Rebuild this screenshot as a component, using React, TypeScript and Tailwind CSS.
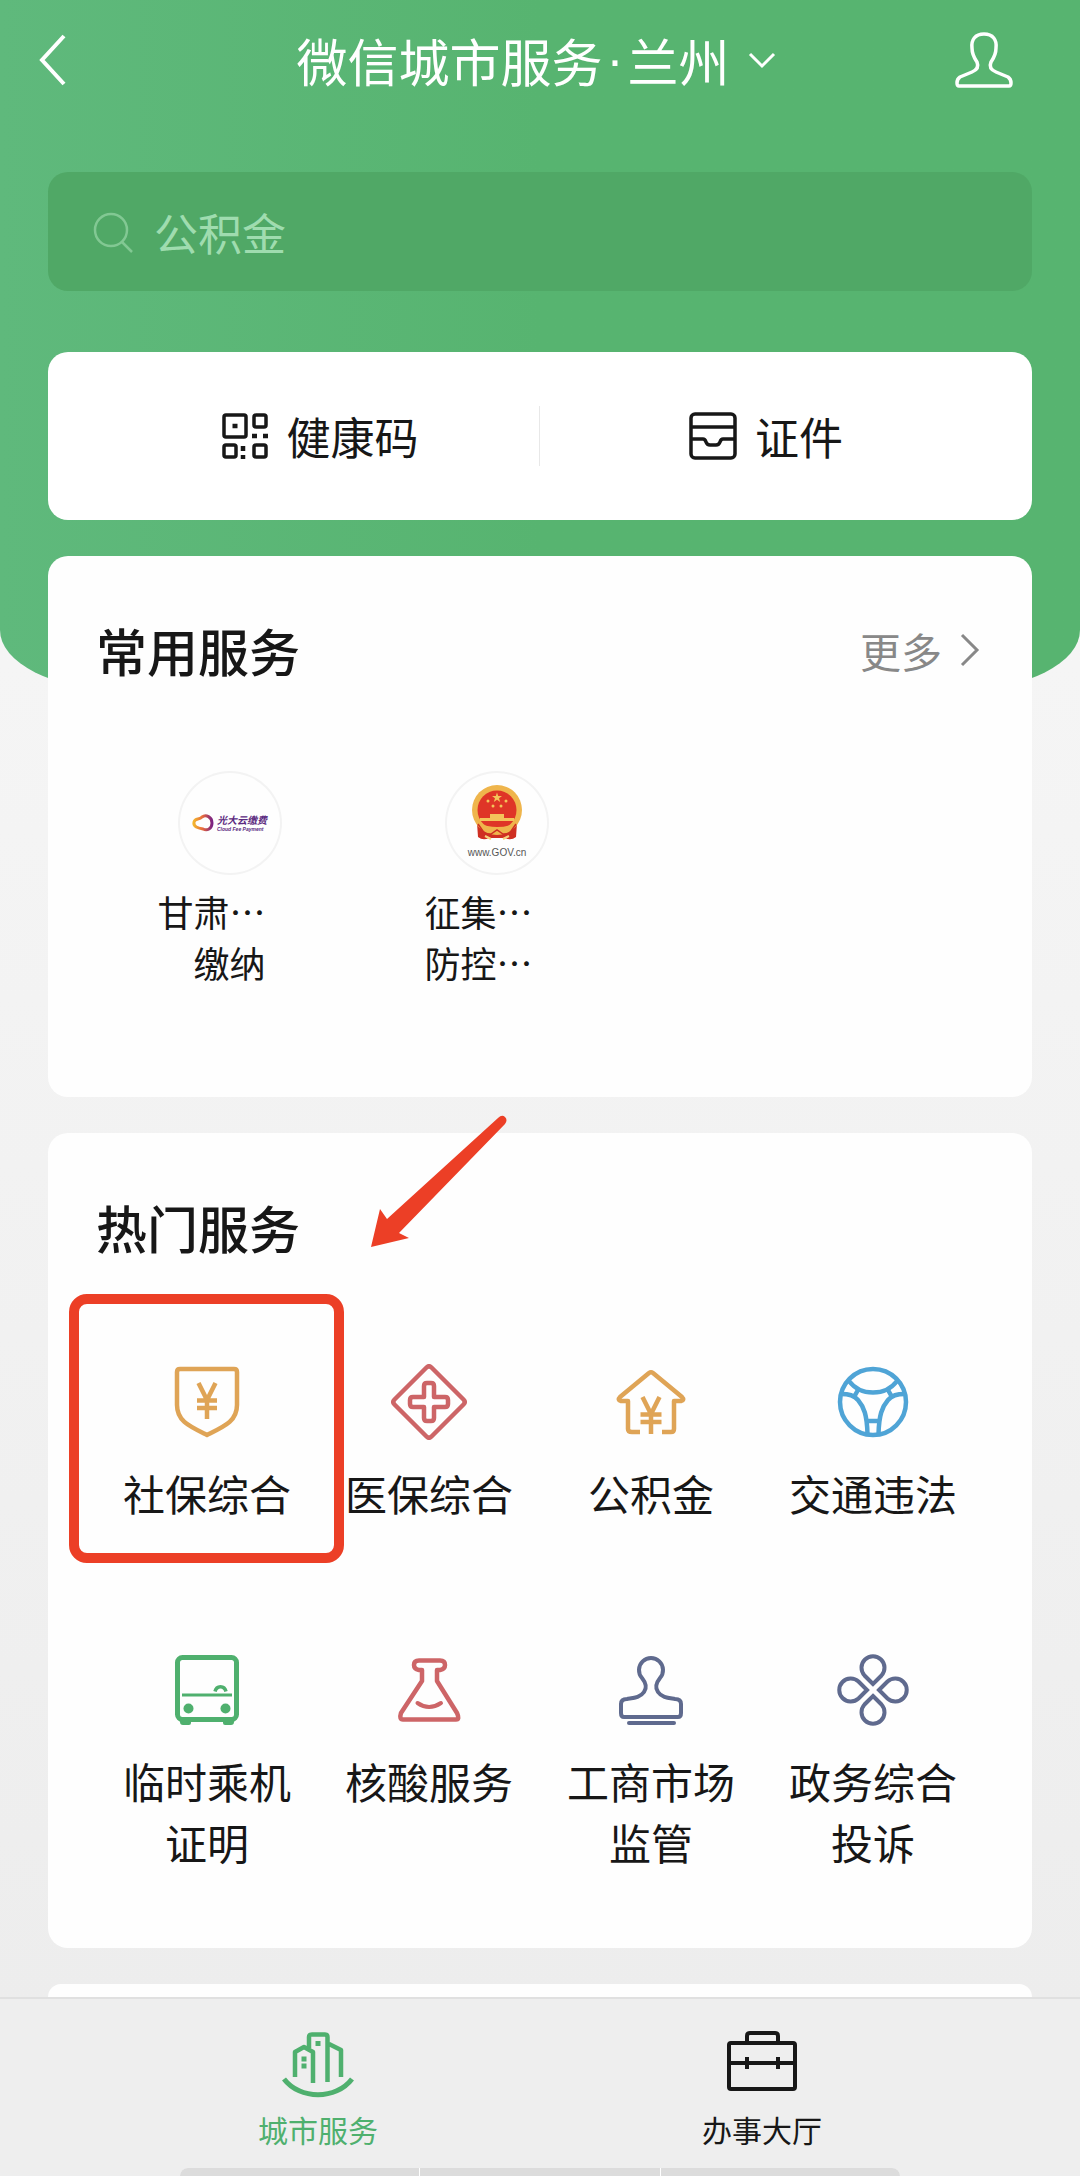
import React from 'react';

interface Service {
  name: string;
  color: string;
  icon: React.ReactNode;
  highlighted?: boolean;
}

const iconProps = {
  viewBox: '0 0 76 76',
  fill: 'none',
  stroke: 'currentColor',
  strokeWidth: 4.5,
  strokeLinejoin: 'round' as const,
  'aria-hidden': true,
};

const ShieldIcon = () => (
  <svg {...iconProps} className="size-[76px]">
    <path d="M11 5H65Q68 5 68 8V41C68 57 56 62 38 71C20 62 8 57 8 41V8Q8 5 11 5Z" />
    <path d="M29.500 19L38 36L46.500 19M28 36.500H48M28 44H48M38 35V55" />
  </svg>
);

const MedicalIcon = () => (
  <svg {...iconProps} className="size-[76px]">
    <path d="M35.500 3.500Q38 1 40.500 3.500L72.500 35.500Q75 38 72.500 40.500L40.500 72.500Q38 75 35.500 72.500L3.500 40.500Q1 38 3.500 35.500Z" />
    <path d="M36 19H40Q43 19 43 22V33H54Q57 33 57 36V40Q57 43 54 43H43V54Q43 57 40 57H36Q33 57 33 54V43H22Q19 43 19 40V36Q19 33 22 33H33V22Q33 19 36 19Z" />
  </svg>
);

const HouseIcon = () => (
  <svg {...iconProps} className="size-[76px]">
    <path d="M27 68H19Q15 68 15 65V37H8Q4 36 7 33L36 9Q38 7.500 40 9L69 33Q72 36 68 37H61V65Q61 68 58 68H49" />
    <path d="M29.500 33L38 50L46.500 33M27.500 50.500H48.500M27.500 58H48.500M38 49V70" />
  </svg>
);

const WheelIcon = () => (
  <svg {...iconProps} className="size-[76px]">
    <circle cx="38" cy="38" r="33" />
    <path d="M14 17C20 25 28 28.500 38 28.500C48 28.500 56 25 62 17" />
    <path d="M6 30C14 30 19 31 23 36C29 43 32 51 32.500 70M70 30C62 30 57 31 53 36C47 43 44 51 43.500 70M33 57H43M23 26L19 33M53 26L57 33" />
  </svg>
);

const BusIcon = () => (
  <svg {...iconProps} className="size-[76px]">
    <rect x="8.500" y="5.500" width="59" height="62" rx="5" strokeWidth="5" />
    <path d="M13 43H63" strokeWidth="3" />
    <path d="M46 39.500C47.500 33 55.500 33 57 39.500" strokeWidth="3.500" />
    <circle cx="19.500" cy="56.500" r="5" fill="currentColor" stroke="none" />
    <circle cx="56.500" cy="56.500" r="5" fill="currentColor" stroke="none" />
    <path d="M11 68H22V71Q22 73 20 73H14Q11 73 11 70ZM54 68H65V70Q65 73 62 73H56Q54 73 54 71Z" fill="currentColor" stroke="none" />
  </svg>
);

const FlaskIcon = () => (
  <svg {...iconProps} className="size-[76px]">
    <path d="M31 18H28Q23 17 23 13Q23 8.500 28 8.500H49Q54 8.500 54 13Q54 17 49 18H46V29L66 61Q69 67.500 65 67.500H12Q8 67.500 10 61L31 29Z" />
    <path d="M26.500 51Q38 59 50 51" strokeLinecap="round" strokeWidth="4" />
  </svg>
);

const StampIcon = () => (
  <svg {...iconProps} strokeWidth={4} className="size-[76px]">
    <path d="M29 26A12 12 0 1 1 47 26C43 31 42 36 45 40C49 46 56 46 62 47Q68 47 68 52V61Q68 65 65 65H11Q8 65 8 61V52Q8 47 14 47C20 46 27 46 31 40C34 36 33 31 29 26Z" />
    <path d="M16 71H61" strokeLinecap="round" />
  </svg>
);

const CloverIcon = () => (
  <svg {...iconProps} strokeWidth={4} strokeLinejoin="miter" className="size-[76px]">
    {[0, 90, 180, 270].map((angle) => (
      <path
        key={angle}
        d="M38 32L29.500 23.500A11.500 11.500 0 1 1 46.500 23.500Z"
        transform={`rotate(${angle} 38 38)`}
      />
    ))}
  </svg>
);

const services: Service[] = [
  { name: '社保综合', color: 'text-[#dfa456]', icon: <ShieldIcon />, highlighted: true },
  { name: '医保综合', color: 'text-[#cd6567]', icon: <MedicalIcon /> },
  { name: '公积金', color: 'text-[#dfa456]', icon: <HouseIcon /> },
  { name: '交通违法', color: 'text-[#4fa4d6]', icon: <WheelIcon /> },
  { name: '临时乘机证明', color: 'text-[#4fb06e]', icon: <BusIcon /> },
  { name: '核酸服务', color: 'text-[#cd6567]', icon: <FlaskIcon /> },
  { name: '工商市场监管', color: 'text-[#5f6a8e]', icon: <StampIcon /> },
  { name: '政务综合投诉', color: 'text-[#5f6a8e]', icon: <CloverIcon /> },
];

const CloudPayLogo = () => (
  <svg viewBox="0 0 104 104" className="size-[104px]" aria-hidden="true">
    <defs>
      <linearGradient id="cloud-pay" x1="0" x2="1" y1="0" y2="0">
        <stop offset="0" stopColor="#f3b52f" />
        <stop offset="0.5" stopColor="#e5673f" />
        <stop offset="1" stopColor="#7b2382" />
      </linearGradient>
    </defs>
    <path
      d="M16 51C17 47 21 49 24 46C28 43 34 46 34 52C34 58 29 60 25 58C20 57 15 56 16 51Z"
      fill="none"
      stroke="url(#cloud-pay)"
      strokeWidth="3"
    />
    <text x="39" y="53" fontSize="10" fontWeight="700" fontStyle="italic" fill="#5b2a80">
      光大云缴费
    </text>
    <text x="39" y="60" fontSize="5" fontWeight="700" fontStyle="italic" fill="#5b2a80" fontFamily="Liberation Sans">
      Cloud Fee Payment
    </text>
  </svg>
);

const GovLogo = () => (
  <svg viewBox="0 0 104 104" className="size-[104px]" aria-hidden="true">
    <path d="M32 52H72L71 66Q66 70 60 67H44Q38 70 33 66Z" fill="#cf2f22" />
    <circle cx="52" cy="39" r="25" fill="#efb54c" />
    <circle cx="52" cy="39" r="19.500" fill="#df3527" />
    <path d="M52 21.500L53.200 25H57L54 27.300L55.200 31L52 28.800L48.800 31L50 27.300L47 25H50.800Z" fill="#f4c45a" />
    <circle cx="43" cy="30" r="1.500" fill="#f4c45a" />
    <circle cx="61" cy="30" r="1.500" fill="#f4c45a" />
    <circle cx="48" cy="35" r="1.500" fill="#f4c45a" />
    <circle cx="56" cy="35" r="1.500" fill="#f4c45a" />
    <path d="M45 43H59V47H69V50H35V47H45Z" fill="#f4c45a" />
    <path d="M33 52Q52 60 71 52L66 60L58 58L52 61L46 58L38 60Z" fill="#efb54c" />
    <path d="M33 53L40 63H46L52 59L58 63H64L71 53" fill="none" stroke="#cf2f22" strokeWidth="1.500" />
    <path d="M40 65L46 68M64 65L58 68" stroke="#f6d27d" strokeWidth="2" />
    <text x="52" y="85" textAnchor="middle" fontSize="10" fill="#555" fontFamily="Liberation Sans">
      www.GOV.cn
    </text>
  </svg>
);

const App: React.FC = () => {
  return (
    <div className="flex min-h-screen flex-col bg-linear-to-b from-[#f9f9f9] to-[#ececec] font-['Noto_Sans_CJK_SC',sans-serif] text-[#171717]">
      <header className="rounded-b-[120px_60px] bg-linear-to-r from-[#5fb97c] via-[#57b470] to-[#57b470] px-12 pb-[170px]">
        <div className="grid h-[120px] grid-cols-[1fr_auto_1fr] items-center text-white">
          <button type="button" aria-label="返回" className="-ml-3 justify-self-start">
            <svg viewBox="0 0 32 52" className="h-[52px] w-8" fill="none" stroke="currentColor" strokeWidth="4" aria-hidden="true">
              <path d="M28 2L6 26L28 50" />
            </svg>
          </button>
          <button type="button" className="flex items-center gap-[18px] pr-2 text-[51px] leading-[60px]">
            <span className="flex">
              微信城市服务
              <span className="px-1 font-['Liberation_Sans',sans-serif]">·</span>
              兰州
            </span>
            <svg viewBox="0 0 28 18" className="h-[18px] w-7" fill="none" stroke="currentColor" strokeWidth="3" aria-hidden="true">
              <path d="M2 3L14 15L26 3" />
            </svg>
          </button>
          <button type="button" aria-label="个人中心" className="mr-[18px] justify-self-end">
            <svg viewBox="0 0 60 58" className="h-[58px] w-[60px]" fill="none" stroke="currentColor" strokeWidth="3.500" strokeLinejoin="round" aria-hidden="true">
              <path d="M30 3C21 3 17 9 18 17C18 24 21 28 23 31C25 36 23 39 18 41L6 46Q3 48 3 52Q3 55 5 55H55Q57 55 57 52Q57 48 54 46L42 41C37 39 35 36 37 31C39 28 42 24 42 17C43 9 39 3 30 3Z" />
            </svg>
          </button>
        </div>

        <label className="mt-[52px] flex h-[119px] items-center gap-5 rounded-[20px] bg-[#50a866] px-11 text-[#9fdcaf]">
          <svg viewBox="0 0 42 42" className="size-[42px] shrink-0 text-[#82c893]" fill="none" stroke="currentColor" strokeWidth="2.500" aria-hidden="true">
            <circle cx="19" cy="19" r="16" />
            <path d="M30 31L40 41" />
          </svg>
          <input
            type="text"
            aria-label="搜索服务"
            placeholder="公积金"
            className="w-full bg-transparent text-[44px] leading-[60px] outline-none placeholder:text-[#9fdcaf]"
          />
        </label>

        <div className="mt-[61px] grid h-[168px] grid-cols-2 items-center rounded-[20px] bg-white text-[44px] leading-[60px]">
          <button type="button" className="flex items-center justify-center gap-[18px] border-r border-[#e8e8e8] pl-[52px]">
            <svg viewBox="0 0 48 48" className="size-12" fill="none" stroke="currentColor" strokeWidth="3.500" aria-hidden="true">
              <rect x="3" y="3" width="22" height="22" rx="2" />
              <rect x="33" y="3" width="12" height="12" rx="2" />
              <rect x="3" y="33" width="12" height="12" rx="2" />
              <rect x="33" y="33" width="12" height="12" rx="2" />
              <path d="M11.500 14H16.500M31 24H36M42 24H47M22 34V39M22 43V47" strokeWidth="4.500" />
            </svg>
            健康码
          </button>
          <button type="button" className="flex items-center justify-center gap-[18px] pr-10">
            <svg viewBox="0 0 48 48" className="size-12" fill="none" stroke="currentColor" strokeWidth="3.500" aria-hidden="true">
              <rect x="2" y="2" width="44" height="44" rx="4" />
              <path d="M2 15H46M2 27H14Q16 27 17 30Q18 33 21 33H27Q30 33 31 30Q32 27 34 27H46" />
            </svg>
            证件
          </button>
        </div>
      </header>

      <main className="-mt-[134px] flex flex-1 flex-col gap-9 px-12">
        <section className="rounded-[20px] bg-[#fefefe] pb-[109px]">
          <div className="flex items-center justify-between px-12 pt-16">
            <h2 className="text-[51px] leading-[60px] font-medium">常用服务</h2>
            <a href="#more" className="flex items-center gap-[18px] pr-1 text-[41px] leading-[60px] text-[#888]">
              更多
              <svg viewBox="0 0 20 34" className="h-[34px] w-5" fill="none" stroke="currentColor" strokeWidth="3" aria-hidden="true">
                <path d="M2 2L17 17L2 32" />
              </svg>
            </a>
          </div>
          <div className="mt-[91px] flex px-12 text-right text-[36px] leading-[51px]">
            <a href="#payment" className="flex w-[267px] flex-col items-center">
              <span className="rounded-full shadow-[inset_0_0_0_2px_#f3f3f3]">
                <CloudPayLogo />
              </span>
              <span className="mt-[11px] pr-9">
                甘肃⋯
                <br />
                缴纳
              </span>
            </a>
            <a href="#collection" className="flex w-[267px] flex-col items-center">
              <span className="rounded-full shadow-[inset_0_0_0_2px_#f3f3f3]">
                <GovLogo />
              </span>
              <span className="mt-[11px] pr-9">
                征集⋯
                <br />
                防控⋯
              </span>
            </a>
          </div>
        </section>

        <section className="relative rounded-[20px] bg-[#fefefe] px-12 pb-[76px]">
          <h2 className="pt-16 text-[51px] leading-[60px] font-medium">热门服务</h2>
          <svg viewBox="0 0 138 134" className="absolute -top-[18px] left-[322px] h-[134px] w-[138px]" fill="#ec3f26" aria-hidden="true">
            <path d="M1 132L10 94L17 104L128 3Q132 -1 135 2Q138 5 135 9L29 118L39 123Z" />
          </svg>
          <div className="mt-[107px] grid grid-cols-4 gap-y-[68px]">
            {services.map((service) => (
              <a key={service.name} href="#service" className="relative flex min-h-[220px] flex-col items-center">
                <span className={service.color}>{service.icon}</span>
                <span className="mt-[22px] w-[170px] text-center text-[42px] leading-[61px]">
                  {service.name}
                </span>
                {service.highlighted && (
                  <span className="absolute -top-[70px] -left-[27px] h-[269px] w-[275px] rounded-[18px] border-10 border-[#ec3f26]" />
                )}
              </a>
            ))}
          </div>
        </section>

        <section className="min-h-3 flex-1 rounded-t-[20px] bg-[#fefefe]" />
      </main>

      <nav className="sticky bottom-0 border-t-2 border-[#e0e0e0] bg-[#eee]">
        <div className="grid grid-cols-2 px-24 pt-7 text-[30px] leading-[40px]">
          <a href="#city" className="flex flex-col items-center text-[#4fb06e]">
            <svg {...iconProps} className="size-[76px]">
              <path d="M15 50V25L24 20L33 25V56M29 21V10Q29 7.500 32 7.500H45Q47.500 7.500 47.500 10V55M49 17L61 23V50" />
              <path d="M4 52C20 73 56 73 72 52" strokeWidth="5" />
              <path d="M35.500 16.500H40.500M21.500 32H26.500M21.500 39H26.500" strokeWidth="5" />
            </svg>
            <span className="mt-[6px]">城市服务</span>
          </a>
          <a href="#hall" className="flex flex-col items-center">
            <svg {...iconProps} strokeWidth={4} className="size-[76px]">
              <rect x="5" y="16" width="66" height="46" rx="2" />
              <path d="M23 16V9Q23 6 26 6H51Q54 6 54 9V16M5 36H71M23 30V42M54 30V42" />
            </svg>
            <span className="mt-[6px]">办事大厅</span>
          </a>
        </div>
        <div className="mx-auto mt-[19px] grid h-2 w-2/3 grid-cols-3 gap-px overflow-hidden rounded-t-lg bg-white">
          <span className="bg-[#dcdcdc]" />
          <span className="bg-[#dcdcdc]" />
          <span className="bg-[#dcdcdc]" />
        </div>
      </nav>
    </div>
  );
};

export default App;
